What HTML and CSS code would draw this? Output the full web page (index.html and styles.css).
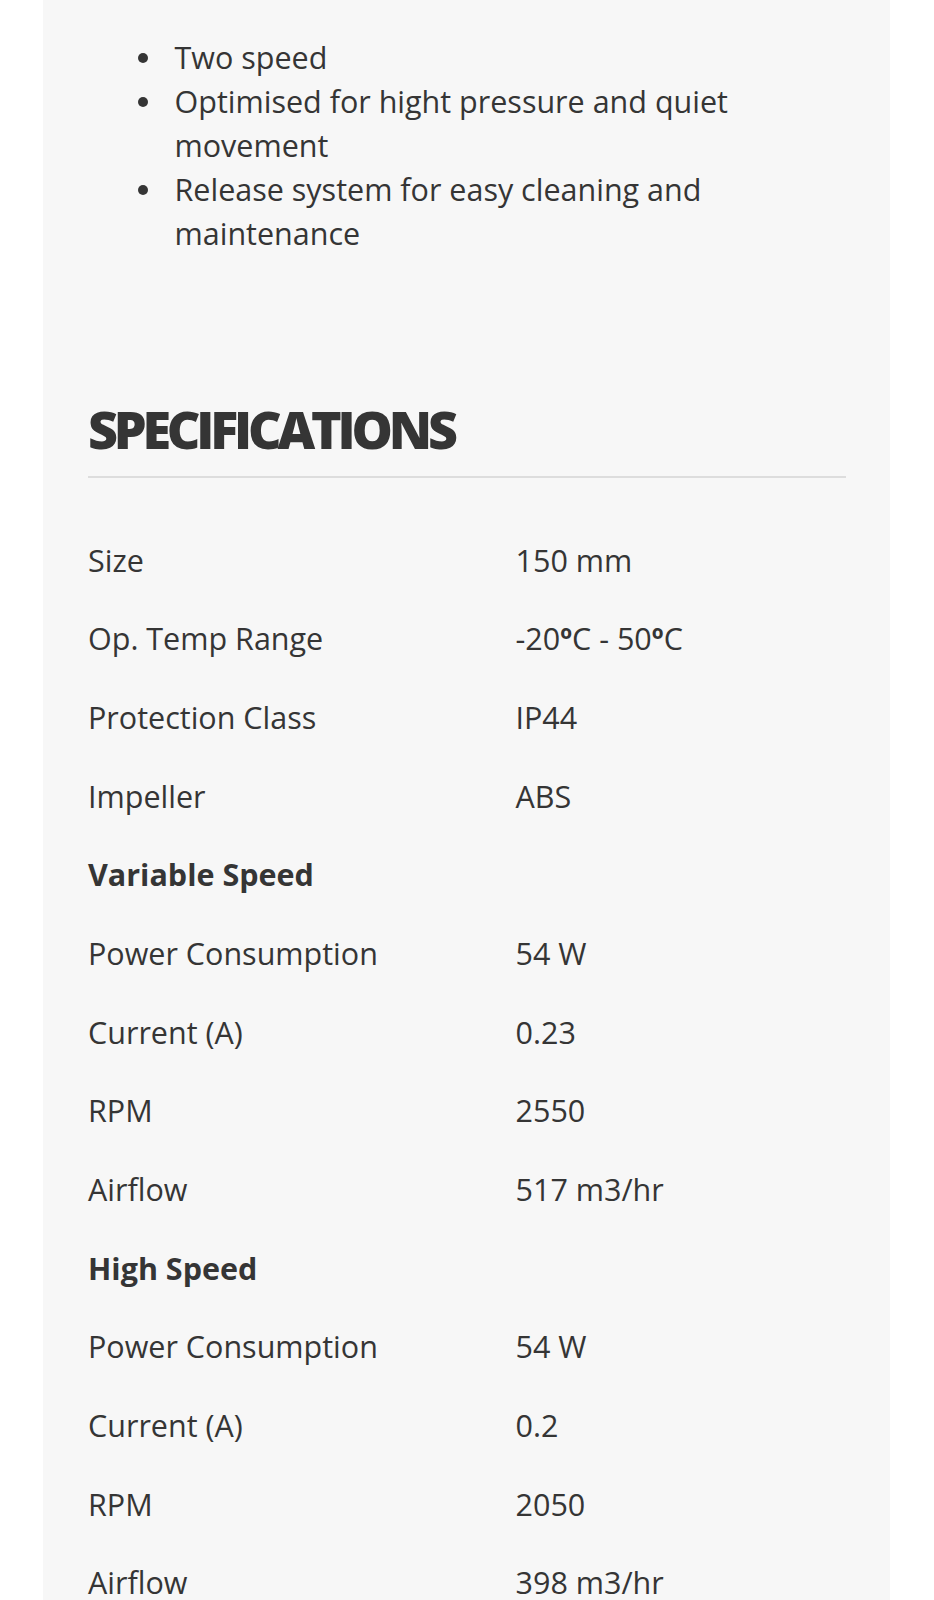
FILE: index.html
```html
<!DOCTYPE html>
<html lang="en">
<head>
<meta charset="utf-8">
<title>Specifications</title>
<link rel="stylesheet" href="styles.css">
</head>
<body>
<div class="card">
  <ul class="features">
    <li>Two speed</li>
    <li>Optimised for hight pressure and quiet movement</li>
    <li>Release system for easy cleaning and maintenance</li>
  </ul>
  <h2 class="spec-title">SPECIFICATIONS</h2>
  <div class="specs">
    <div class="row"><span class="label">Size</span><span class="value">150 mm</span></div>
    <div class="row"><span class="label">Op. Temp Range</span><span class="value">-20<b class="deg">º</b>C - 50<b class="deg">º</b>C</span></div>
    <div class="row"><span class="label">Protection Class</span><span class="value">IP44</span></div>
    <div class="row"><span class="label">Impeller</span><span class="value">ABS</span></div>
    <div class="row group"><span class="label">Variable Speed</span><span class="value"></span></div>
    <div class="row"><span class="label">Power Consumption</span><span class="value">54 W</span></div>
    <div class="row"><span class="label">Current (A)</span><span class="value">0.23</span></div>
    <div class="row"><span class="label">RPM</span><span class="value">2550</span></div>
    <div class="row"><span class="label">Airflow</span><span class="value">517 m3/hr</span></div>
    <div class="row group"><span class="label">High Speed</span><span class="value"></span></div>
    <div class="row"><span class="label">Power Consumption</span><span class="value">54 W</span></div>
    <div class="row"><span class="label">Current (A)</span><span class="value">0.2</span></div>
    <div class="row"><span class="label">RPM</span><span class="value">2050</span></div>
    <div class="row"><span class="label">Airflow</span><span class="value">398 m3/hr</span></div>
  </div>
</div>
</body>
</html>
```

FILE: styles.css
```css
html, body {
  margin: 0;
  padding: 0;
  background: #ffffff;
}

body {
  font-family: "Open Sans", "Noto Sans", sans-serif;
  color: #353535;
}

.card {
  box-sizing: border-box;
  margin-left: 43px;
  width: 847px;
  min-height: 1600px;
  background: #f7f7f7;
  padding: 35px 44px 0 45px;
}

.features {
  list-style: none;
  margin: 0;
  padding: 0;
  font-size: 30.5px;
  line-height: 44px;
}

.features li {
  display: grid;
  grid-template-columns: 86.5px 1fr;
}

.features li::before {
  content: "";
  width: 10px;
  height: 10px;
  border-radius: 50%;
  background: #353535;
  margin: 18px 0 0 50px;
}

.spec-title {
  margin: 142.5px 0 0;
  padding-bottom: 16px;
  border-bottom: 2px solid #dddddd;
  font-size: 52px;
  line-height: 62px;
  font-weight: 800;
  letter-spacing: -4.2px;
  color: #353535;
}

.specs {
  margin-top: 43px;
  font-size: 30.5px;
  line-height: 44px;
}

.row {
  display: grid;
  grid-template-columns: 427.5px 1fr;
  padding: 17.33px 0;
}

.row.group .label {
  font-weight: 700;
}

.deg {
  font-weight: 700;
}
```
